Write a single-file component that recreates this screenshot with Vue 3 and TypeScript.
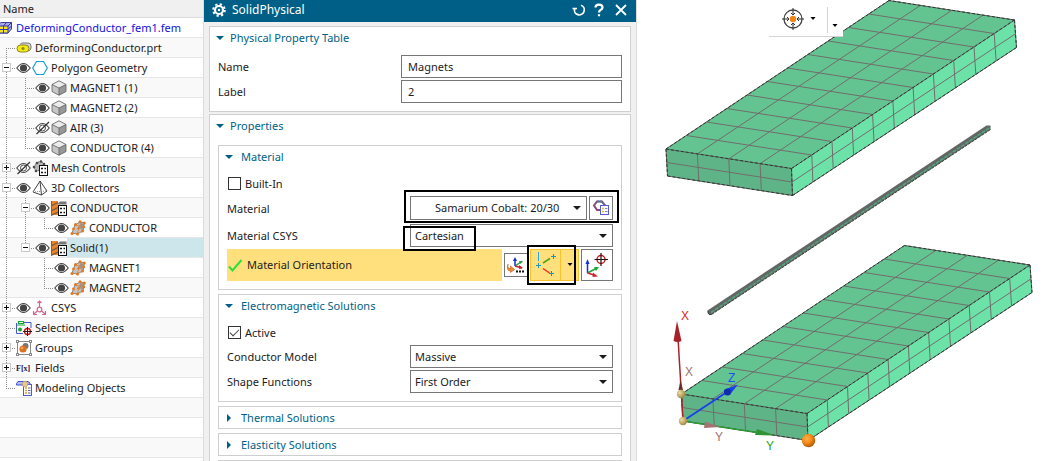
<script setup lang="ts">
import { ref } from 'vue'

type Point = [number, number]
type Icon =
  | 'fem' | 'part' | 'polygon' | 'body' | 'mesh' | 'pyramid' | 'collector'
  | 'elements' | 'csys' | 'recipe' | 'groups' | 'fields' | 'objects' | 'none'

interface TreeRow {
  label: string
  icon: Icon
  /* one entry per ancestor level, true where its trunk line runs on */
  through: boolean[]
  trunk: 'start' | 'full' | 'end' | 'none'
  toggle?: 'plus' | 'minus'
  eye?: 'on' | 'off'
  root?: boolean
  selected?: boolean
}

const rows: TreeRow[] = [
  { label: 'DeformingConductor_fem1.fem', icon: 'fem', through: [], trunk: 'none', root: true },
  { label: 'DeformingConductor.prt', icon: 'part', through: [], trunk: 'start' },
  { label: 'Polygon Geometry', icon: 'polygon', through: [], trunk: 'full', toggle: 'minus', eye: 'on' },
  { label: 'MAGNET1 (1)', icon: 'body', through: [true], trunk: 'full', eye: 'on' },
  { label: 'MAGNET2 (2)', icon: 'body', through: [true], trunk: 'full', eye: 'on' },
  { label: 'AIR (3)', icon: 'body', through: [true], trunk: 'full', eye: 'off' },
  { label: 'CONDUCTOR (4)', icon: 'body', through: [true], trunk: 'end', eye: 'on' },
  { label: 'Mesh Controls', icon: 'mesh', through: [], trunk: 'full', toggle: 'plus', eye: 'off' },
  { label: '3D Collectors', icon: 'pyramid', through: [], trunk: 'full', toggle: 'minus', eye: 'on' },
  { label: 'CONDUCTOR', icon: 'collector', through: [true], trunk: 'full', toggle: 'minus', eye: 'on' },
  { label: 'CONDUCTOR', icon: 'elements', through: [true, true], trunk: 'end', eye: 'on' },
  { label: 'Solid(1)', icon: 'collector', through: [true], trunk: 'end', toggle: 'minus', eye: 'on', selected: true },
  { label: 'MAGNET1', icon: 'elements', through: [true, false], trunk: 'full', eye: 'on' },
  { label: 'MAGNET2', icon: 'elements', through: [true, false], trunk: 'end', eye: 'on' },
  { label: 'CSYS', icon: 'csys', through: [], trunk: 'full', toggle: 'plus', eye: 'on' },
  { label: 'Selection Recipes', icon: 'recipe', through: [], trunk: 'full' },
  { label: 'Groups', icon: 'groups', through: [], trunk: 'full', toggle: 'plus' },
  { label: 'Fields', icon: 'fields', through: [], trunk: 'full', toggle: 'plus' },
  { label: 'Modeling Objects', icon: 'objects', through: [], trunk: 'end' },
  { label: '', icon: 'none', through: [], trunk: 'none' },
  { label: '', icon: 'none', through: [], trunk: 'none' },
  { label: '', icon: 'none', through: [], trunk: 'none' },
  { label: '', icon: 'none', through: [], trunk: 'none' },
]

const name = ref('Magnets')
const label = ref('2')
const builtIn = ref(false)
const active = ref(true)
const collapsed = ['Thermal Solutions', 'Elasticity Solutions']

const mix = (a: Point, b: Point, t: number): Point => [a[0] + (b[0] - a[0]) * t, a[1] + (b[1] - a[1]) * t]
const seg = (a: Point, b: Point) => `M${a[0].toFixed(1)} ${a[1].toFixed(1)}L${b[0].toFixed(1)} ${b[1].toFixed(1)}`
const face = (...p: Point[]) => p.map((q) => q.join(',')).join(' ')

function grid(a: Point, b: Point, c: Point, d: Point, alongAB: number, alongBC: number) {
  let path = ''
  for (let i = 1; i < alongAB; i++) path += seg(mix(a, b, i / alongAB), mix(d, c, i / alongAB))
  for (let i = 1; i < alongBC; i++) path += seg(mix(b, c, i / alongBC), mix(a, d, i / alongBC))
  return path
}

function block(dx: number, dy: number) {
  const p = (x: number, y: number): Point => [x + dx, y + dy]
  const a = p(666, 149)
  const b = p(791.5, 168.5)
  const c = p(1014.5, 20)
  const d = p(889, 0.5)
  const a2 = p(667.5, 176)
  const b2 = p(792.5, 195.5)
  const c2 = p(1016.5, 47.5)
  return {
    top: face(a, b, c, d),
    front: face(a, b, b2, a2),
    side: face(b, c, c2, b2),
    lines: grid(a, b, c, d, 4, 11) + grid(a, b, b2, a2, 4, 2) + grid(b, c, c2, b2, 11, 2),
    hard: seg(a, b) + seg(b, c) + seg(c, d) + seg(d, a) + seg(b, b2) + seg(a, a2) + seg(a2, b2) + seg(b2, c2) + seg(c, c2),
  }
}

const blocks = [block(0, 0), block(15.5, 245)]
</script>

<template>
  <main class="app">
    <aside class="tree">
      <header class="tree-head">Name</header>
      <ul>
        <li v-for="(row, i) in rows" :key="i" :class="{ root: row.root }">
          <svg v-for="(on, g) in row.through" :key="g" class="guide" viewBox="0 0 19 20">
            <path v-if="on" class="dots" d="M6.5 0V20" />
          </svg>
          <span v-if="!row.root && row.icon !== 'none'" class="branch">
            <svg viewBox="0 0 16 20">
              <path v-if="row.trunk === 'start'" class="dots" d="M6.5 10V20" />
              <path v-if="row.trunk === 'full'" class="dots" d="M6.5 0V20" />
              <path v-if="row.trunk === 'end'" class="dots" d="M6.5 0V10" />
              <path class="dots" d="M6 10.5H15" />
            </svg>
            <button v-if="row.toggle" class="toggle" type="button" :aria-label="'Toggle ' + row.label">
              <svg viewBox="0 0 9 9">
                <rect x=".5" y=".5" width="8" height="8" fill="#fff" stroke="#c9c9c9" />
                <path :d="row.toggle === 'plus' ? 'M2 4.5H7M4.5 2V7' : 'M2 4.5H7'" stroke="#111" />
              </svg>
            </button>
          </span>
          <button v-if="row.eye" class="eye" type="button" :aria-label="'Visibility of ' + row.label">
            <svg viewBox="0 0 16 16">
              <path d="M.8 8Q7.500 -1 14.200 8Q7.500 17 .8 8Z" fill="#fff" stroke="#4a4a4a" stroke-width="1.200" />
              <circle v-if="row.eye === 'on'" cx="7.500" cy="8" r="3.600" fill="#444" />
              <template v-else>
                <circle cx="7.500" cy="8" r="3" fill="none" stroke="#4a4a4a" />
                <path d="M1.500 14L14 2" stroke="#333" stroke-width="1.200" />
              </template>
            </svg>
          </button>

          <svg v-if="row.icon === 'fem'" class="icon fem" viewBox="0 0 13 16">
            <path d="M-3 6L1 2.500H11.500V9L8 13H-3Z" fill="#a9a9e4" stroke="#3c3c9c" />
            <path d="M-1 6H8V13H-1Z" fill="#f4e52a" stroke="#3434a8" />
            <path d="M3.500 6V13M-1 9.500H8M8 6L11.500 2.500M3.500 6L6.500 2.500M8 9.500L11.500 6" stroke="#3434a8" fill="none" />
          </svg>
          <svg v-else-if="row.icon === 'part'" class="icon" viewBox="0 0 16 16">
            <path d="M4 4.500Q5 3 7 3H12Q15 3 15 6V8Q15 10 12.500 11" fill="#d6d6d6" stroke="#777" />
            <rect x="1" y="5" width="12" height="7" rx="3.500" fill="#f4ea10" stroke="#8b8527" />
            <circle cx="7" cy="8.500" r="1.600" fill="#8c8a30" />
          </svg>
          <svg v-else-if="row.icon === 'polygon'" class="icon" viewBox="0 0 16 16">
            <path d="M4.500 1.500H11.500L15.300 8L11.500 14.500H4.500L.7 8Z" fill="#fff" stroke="#1ba3c6" stroke-width="1.200" />
          </svg>
          <svg v-else-if="row.icon === 'body'" class="icon" viewBox="0 0 16 16">
            <path d="M8 .8L15 4.500V11.500L8 15.300L1 11.500V4.500Z" fill="#c6c6c6" />
            <path d="M8 .8L15 4.500L8 8L1 4.500Z" fill="#ececec" />
            <path d="M8 8L15 4.500V11.500L8 15.300Z" fill="#989898" />
            <path d="M8 .8L15 4.500V11.500L8 15.300L1 11.500V4.500ZM1 4.500L8 8L15 4.500M8 8V15" fill="none" stroke="#5d5d5d" stroke-width=".8" />
          </svg>
          <svg v-else-if="row.icon === 'mesh'" class="icon" viewBox="0 0 16 16">
            <path d="M2 8L4 3L9 1L12 4L11 10L4 11Z" fill="#b8b8b8" stroke="#666" stroke-dasharray="1.500 1" />
            <g fill="#4a4a4a"><circle cx="2" cy="7" r="1.300" /><circle cx="5" cy="3" r="1.300" /><circle cx="9" cy="1.500" r="1.300" /><circle cx="4" cy="11" r="1.300" /><circle cx="12" cy="4" r="1.300" /></g>
            <rect x="7.500" y="5.500" width="8" height="10" fill="#fff" stroke="#111" />
            <path d="M9 8.500H11M12.500 8.500H14M9 12.500H11M12.500 12.500H14" stroke="#111" stroke-width="1.600" />
          </svg>
          <svg v-else-if="row.icon === 'pyramid'" class="icon" viewBox="0 0 16 16">
            <path d="M8 1L1 12L9.500 15L15 11Z" fill="#fff" stroke="#444" stroke-linejoin="round" />
            <path d="M8 1L9.500 15" stroke="#444" />
            <path d="M1 12L15 11" stroke="#888" stroke-dasharray="1 1" />
          </svg>
          <svg v-else-if="row.icon === 'collector'" class="icon" viewBox="0 0 16 16">
            <rect x="0" y="1" width="7" height="14" fill="#e8842a" />
            <path d="M0 6L7 2.500M0 11L7 7.500M0 15.500L7 12" stroke="#7a5a36" stroke-width="1.200" />
            <path d="M.5 1V15" stroke="#a75a1a" />
            <path d="M7 3.500L9 1.500H15.500V4.500H7Z" fill="#777" />
            <rect x="7.500" y="5.500" width="8" height="10" fill="#fff" stroke="#111" />
            <path d="M9 8.500H11M12.500 8.500H14M9 12.500H11M12.500 12.500H14" stroke="#111" stroke-width="1.600" />
          </svg>
          <svg v-else-if="row.icon === 'elements'" class="icon" viewBox="0 0 16 16">
            <path d="M2 13L5 5L10 2L14.500 3L13 11L7 14Z" fill="#c4c4c4" stroke="#8a8a8a" />
            <path d="M10 3L14 4L12.500 10L9 8Z" fill="#999" />
            <path d="M5 5L9 6L7.500 14M9 6L14 3" stroke="#e07b22" stroke-width=".7" fill="none" />
            <g fill="#e8761a"><circle cx="2" cy="13.500" r="1.500" /><circle cx="3.500" cy="9" r="1.400" /><circle cx="5.500" cy="4.500" r="1.500" /><circle cx="10" cy="1.700" r="1.500" /><circle cx="14.300" cy="3" r="1.500" /><circle cx="13.700" cy="7" r="1.400" /><circle cx="12.500" cy="11" r="1.500" /><circle cx="7.500" cy="14" r="1.500" /><circle cx="8.500" cy="8.500" r="1.200" /></g>
          </svg>
          <svg v-else-if="row.icon === 'csys'" class="icon" viewBox="0 0 16 16">
            <g fill="none" stroke="#d2668c" stroke-width="1.200">
              <path d="M7.500 1V9M7.500 9L2 14M7.500 9L13 14M5.500 3L7.500 1L9.500 3M1.500 11V14.500H5M10 14.500H13.500V11" />
              <circle cx="7.500" cy="9.500" r="2.300" fill="#fff" />
            </g>
          </svg>
          <svg v-else-if="row.icon === 'recipe'" class="icon" viewBox="0 0 16 16">
            <path d="M.5 3V13.500H7M15 8V2.500H8" fill="none" stroke="#4a58c8" />
            <path d="M2.500 1.500H7.500V3.500H2.500ZM1 5H9" fill="none" stroke="#12a82c" stroke-width="1.200" />
            <circle cx="4" cy="9.500" r="2" fill="#12a82c" />
            <circle cx="11.500" cy="11.500" r="3" fill="#fff" stroke="#c01818" stroke-width="1.300" />
            <path d="M11.500 7V16M7 11.500H16" stroke="#401010" />
          </svg>
          <svg v-else-if="row.icon === 'groups'" class="icon" viewBox="0 0 16 16">
            <rect x="1.500" y="1.500" width="13" height="13" fill="#fff" stroke="#8a8a8a" />
            <circle cx="9.500" cy="6" r="3" fill="#777" />
            <circle cx="7" cy="9" r="3.600" fill="#e06f1c" />
            <circle cx="6" cy="8" r="1.300" fill="#f5a55e" />
            <g fill="#fff" stroke="#888"><rect x=".5" y=".5" width="2" height="2" /><rect x="13.500" y=".5" width="2" height="2" /><rect x=".5" y="13.500" width="2" height="2" /><rect x="13.500" y="13.500" width="2" height="2" /></g>
          </svg>
          <svg v-else-if="row.icon === 'fields'" class="icon" viewBox="0 0 16 16">
            <text x="0" y="11" class="fx">F[x]</text>
          </svg>
          <svg v-else-if="row.icon === 'objects'" class="icon" viewBox="0 0 16 16">
            <path d="M.5 3.500L2 1.500H12L14 3V5H.5Z" fill="#aebcf2" stroke="#3b4fd0" />
            <rect x="7.500" y="4.500" width="8" height="11" fill="#fff" stroke="#4a5fc8" />
            <path d="M9 8H11M9 10.500H11M9 13H11" stroke="#e0a818" stroke-width="1.500" />
            <path d="M12 8H14.500M12 10.500H14.500M12 13H14.500" stroke="#5060b0" />
            <circle cx="9" cy="4" r="2.800" fill="#e9c78f" stroke="#b9966a" stroke-width=".7" />
          </svg>
          <span v-if="row.label" class="label" :class="{ selected: row.selected }">{{ row.label }}</span>
        </li>
      </ul>
    </aside>

    <section class="dialog" aria-label="SolidPhysical">
      <header class="title">
        <svg class="gear" viewBox="0 0 14 14">
          <circle cx="7" cy="7" r="5.800" fill="none" stroke="#fff" stroke-width="2" stroke-dasharray="2.300 2.255" />
          <circle cx="7" cy="7" r="4" fill="none" stroke="#fff" stroke-width="2.200" />
          <circle cx="7" cy="7" r="1.200" fill="#fff" />
        </svg>
        <h1>SolidPhysical</h1>
        <button type="button" aria-label="Reset">
          <svg viewBox="0 0 14 14"><path d="M9 2.200A5 5 0 1 1 2.500 5.500M.5 5.500H5M2.500 5.500V8" fill="none" stroke="#fff" stroke-width="1.700" /></svg>
        </button>
        <button type="button" aria-label="Help">
          <svg viewBox="0 0 14 14"><path d="M3.500 4.500Q3.500 1.600 7 1.600T10.500 4.500Q10.500 6 8.500 7Q7 7.800 7 9.500M7 11.200V13.200" fill="none" stroke="#fff" stroke-width="2.200" /></svg>
        </button>
        <button type="button" aria-label="Close" class="close">
          <svg viewBox="0 0 14 14"><path d="M2 2L12 12M12 2L2 12" stroke="#fff" stroke-width="1.800" /></svg>
        </button>
      </header>

      <div class="panels">
        <section class="panel">
          <h2><svg viewBox="0 0 8 8"><path d="M0 2H8L4 6Z" /></svg>Physical Property Table</h2>
          <div class="body">
            <div class="row">
              <label for="f-name">Name</label>
              <input id="f-name" v-model="name" class="field" type="text" />
            </div>
            <div class="row">
              <label for="f-label">Label</label>
              <input id="f-label" v-model="label" class="field" type="text" />
            </div>
          </div>
        </section>

        <section class="panel grow">
          <h2><svg viewBox="0 0 8 8"><path d="M0 2H8L4 6Z" /></svg>Properties</h2>
          <div class="groups">
            <section class="group">
              <h3><svg viewBox="0 0 8 8"><path d="M0 2H8L4 6Z" /></svg>Material</h3>
              <div class="body">
                <label class="check"><input v-model="builtIn" type="checkbox" />Built-In</label>
                <div class="row tall">
                  <label for="f-mat">Material</label>
                  <div class="pair marked">
                    <div class="combo indent">
                      <select id="f-mat"><option>Samarium Cobalt: 20/30</option></select>
                      <svg viewBox="0 0 8 8"><path d="M0 2H8L4 6Z" /></svg>
                    </div>
                    <button type="button" class="tool small" aria-label="Choose material">
                      <svg viewBox="0 0 18 18">
                        <path d="M5 2.500H10L13 6.500L10 11H5L2 6.500Z" fill="none" stroke="#8a4a78" stroke-width="2" />
                        <path d="M5 2.500H10L13 6.500" fill="none" stroke="#4a7f9c" stroke-width="2" stroke-dasharray="2 1" />
                        <rect x="8.500" y="6.500" width="8" height="9" fill="#fdfdff" stroke="#5a5ad8" />
                        <path d="M10 9.500H12M10 12.500H12" stroke="#d8c41c" stroke-width="1.500" />
                        <path d="M13 9.500H15.500M13 12.500H15.500" stroke="#8484b8" />
                      </svg>
                    </button>
                  </div>
                </div>
                <div class="row">
                  <label for="f-csys">Material CSYS</label>
                  <div class="combo value-marked">
                    <select id="f-csys"><option>Cartesian</option></select>
                    <svg viewBox="0 0 8 8"><path d="M0 2H8L4 6Z" /></svg>
                  </div>
                </div>
                <div class="orient">
                  <div class="orient-label">
                    <svg viewBox="0 0 16 16"><path d="M2 9.500L5.500 13.500L14.500 3" fill="none" stroke="#2be03a" stroke-width="2" /></svg>
                    Material Orientation
                  </div>
                  <button type="button" class="tool small" aria-label="CSYS dialog">
                    <svg viewBox="0 0 18 18">
                      <path d="M8 10V3" stroke="#1a2ad0" stroke-width="1.500" /><path d="M6 5L8 1L10 5Z" fill="#1a2ad0" />
                      <path d="M8 10L14 6" stroke="#1f9a3a" stroke-width="1.500" /><path d="M12 5L16 5L13.500 8Z" fill="#1f9a3a" />
                      <path d="M8 10L15 12" stroke="#c81e28" stroke-width="1.500" /><path d="M12 9L16 12L12 13Z" fill="#c81e28" />
                      <path d="M1 8Q0 12.500 3.500 12.500V10L7.500 13.500L3.500 16.500V15Q-1 15 1 8Z" fill="#f08a2a" stroke="#c05a20" stroke-width=".6" />
                      <path d="M9 15.500H11M12 15.500H14M15 15.500H17" stroke="#111" stroke-width="2" />
                    </svg>
                  </button>
                  <div class="split">
                    <button type="button" class="split-main" aria-label="Orient by points">
                      <svg viewBox="0 0 26 30">
                        <path d="M5.500 2V11" stroke="#28a8dc" />
                        <path d="M10 13L17 8.500" stroke="#4aa810" stroke-width="1.500" />
                        <path d="M10 18.500L16.500 23" stroke="#ee2b24" stroke-width="1.500" />
                        <path d="M3 15.500H8M5.500 13V18M18 6.500H23M20.500 4V9M16 23.500H21M18.500 21V26" stroke="#1698b4" />
                      </svg>
                    </button>
                    <button type="button" class="split-more" aria-label="More orientation methods">
                      <svg viewBox="0 0 6 4"><path d="M.5 0H5.500L3 3Z" /></svg>
                    </button>
                  </div>
                  <button type="button" class="tool" aria-label="Manipulate CSYS">
                    <svg viewBox="0 0 26 26">
                      <path d="M3.500 21V11" stroke="#1a2ae0" stroke-width="1.500" /><path d="M1.500 12L3.500 7L5.500 12Z" fill="#1a2ae0" />
                      <path d="M3.500 21L12 16.500" stroke="#19a83a" stroke-width="1.500" /><path d="M10 15L15 15L12 19Z" fill="#19a83a" />
                      <path d="M3.500 21L10 23" stroke="#c82832" stroke-width="1.500" /><path d="M9 20.500L14 24.500L8.500 25Z" fill="#c82832" />
                      <circle cx="17" cy="7.500" r="4" fill="none" stroke="#c02020" stroke-width="1.500" />
                      <path d="M17 1V14M10.500 7.500H24" stroke="#201010" stroke-width="1.200" />
                    </svg>
                  </button>
                </div>
              </div>
            </section>

            <section class="group">
              <h3><svg viewBox="0 0 8 8"><path d="M0 2H8L4 6Z" /></svg>Electromagnetic Solutions</h3>
              <div class="body">
                <label class="check"><input v-model="active" type="checkbox" />Active</label>
                <div class="row">
                  <label for="f-model">Conductor Model</label>
                  <div class="combo">
                    <select id="f-model"><option>Massive</option></select>
                    <svg viewBox="0 0 8 8"><path d="M0 2H8L4 6Z" /></svg>
                  </div>
                </div>
                <div class="row">
                  <label for="f-shape">Shape Functions</label>
                  <div class="combo">
                    <select id="f-shape"><option>First Order</option></select>
                    <svg viewBox="0 0 8 8"><path d="M0 2H8L4 6Z" /></svg>
                  </div>
                </div>
              </div>
            </section>

            <section v-for="t in collapsed" :key="t" class="group">
              <h3><svg viewBox="0 0 8 8"><path d="M2 0L6 4L2 8Z" /></svg>{{ t }}</h3>
            </section>
            <section class="group stub"></section>
          </div>
        </section>
      </div>
    </section>

    <section class="viewport" aria-label="Graphics window">
      <svg class="scene" viewBox="637 0 407 461" preserveAspectRatio="xMinYMin meet">
        <defs>
          <radialGradient id="gold" cx=".35" cy=".35" r=".7"><stop offset="0" stop-color="#efdda0" /><stop offset="1" stop-color="#9c8444" /></radialGradient>
          <radialGradient id="amber" cx=".38" cy=".35" r=".7"><stop offset="0" stop-color="#ffb04a" /><stop offset=".5" stop-color="#f58a16" /><stop offset="1" stop-color="#a85406" /></radialGradient>
        </defs>
        <g v-for="(b, i) in blocks" :key="i">
          <polygon :points="b.top" fill="#63c491" />
          <polygon :points="b.front" fill="#5fb487" />
          <polygon :points="b.side" fill="#6de2a8" />
          <path :d="b.lines" fill="none" stroke="#716d6c" />
          <path :d="b.hard" fill="none" stroke="#5a625d" />
          <path :d="b.hard" fill="none" stroke="#2e3832" stroke-dasharray="3 2" />
        </g>

        <path d="M707.500 310.500L986.500 125.500H990.500V129.500L711.500 314.500L708 314Z" fill="#626664" />
        <path d="M711 312.500L990 127.500" stroke="#56a47e" stroke-width="1.500" stroke-dasharray="4 1" />
        <path d="M711.500 314.500L990.500 129.500M708 311L708.500 314.500L711.500 314.500" fill="none" stroke="#3a423e" stroke-dasharray="3 1" />

        <path d="M683 421L678 338" stroke="#a8242c" stroke-width="1.500" />
        <path d="M677 321L673.500 341Q677.500 343 681.500 341Z" fill="#a82028" />
        <path d="M680.500 380L678.500 390H683Z" fill="#6b2c28" />
        <path d="M683 421L760 433" stroke="#2d9a35" stroke-width="1.500" />
        <path d="M705 421.500L720 427L704 428Z" fill="#a27370" />
        <path d="M757 429L775 435.500L755 435Z" fill="#2f9233" />
        <path d="M683 421L730 390" stroke="#1740ee" stroke-width="1.800" />
        <path d="M738 384.500L724 390Q724 395 730 394.500Z" fill="#1740ee" />
        <circle cx="727.500" cy="392" r="3.500" fill="#0f2cae" />
        <circle cx="681" cy="394" r="4.200" fill="url(#gold)" />
        <circle cx="683" cy="421" r="4.200" fill="url(#gold)" />
        <circle cx="808.500" cy="440.500" r="6.700" fill="url(#amber)" />
        <g class="axis">
          <text x="681" y="320" fill="#d82a2a">X</text>
          <text x="685" y="376" fill="#a27270">X</text>
          <text x="728" y="382" fill="#1a50f0">Z</text>
          <text x="715" y="441" fill="#a27270">Y</text>
          <text x="766" y="450" fill="#2ca02c">Y</text>
        </g>
      </svg>
      <div class="float">
        <button type="button" aria-label="Snap point">
          <svg viewBox="0 0 24 24" class="snap">
            <circle cx="12" cy="12" r="9" fill="none" stroke="#444" stroke-width="1.300" />
            <path d="M12 1V8M12 16V23M1 12H8M16 12H23M10 6L12 8L14 6M10 18L12 16L14 18M6 10L8 12L6 14M18 10L16 12L18 14" fill="none" stroke="#333" />
            <circle cx="12" cy="12" r="3.200" fill="#f48414" />
          </svg>
        </button>
        <button type="button" aria-label="Snap options" class="drop"><svg viewBox="0 0 6 4"><path d="M.5 0H5.500L3 3Z" /></svg></button>
        <button type="button" aria-label="Toolbar options" class="drop more"><svg viewBox="0 0 6 4"><path d="M.5 0H5.500L3 3Z" /></svg></button>
      </div>
    </section>
  </main>
</template>

<style>
html,
body {
  margin: 0;
  background: #fff;
}
</style>

<style scoped>
*,
*::after {
  box-sizing: border-box;
}

.app {
  display: grid;
  grid-template-columns: 204fr 433fr 407fr;
  height: 100vh;
  overflow: hidden;
  font: 11px/16px "Noto Sans", "Open Sans", sans-serif;
  color: #1c1c1c;
}

button {
  display: flex;
  align-items: center;
  justify-content: center;
  margin: 0;
  padding: 0;
  border: 0;
  background: none;
}

svg {
  display: block;
  flex: none;
}

h1,
h2,
h3,
ul {
  margin: 0;
  padding: 0;
  font-size: 11px;
  font-weight: 400;
}

/* navigator tree */
.tree {
  min-width: 0;
  overflow: hidden;
  border-right: 1px solid #dcdcdc;
}

.tree-head {
  height: 18px;
  padding-left: 3px;
  border-bottom: 1px solid #dcdcdc;
  background: #f0f0f0;
  line-height: 18px;
}

.tree li {
  display: flex;
  align-items: center;
  height: 20px;
  border-bottom: 1px solid #e6e6e6;
  white-space: nowrap;
}

.tree li:nth-child(even) {
  background: #f9f9f9;
}

.guide {
  width: 19px;
  height: 20px;
}

.branch {
  display: grid;
  width: 16px;
  height: 20px;
}

.branch > * {
  grid-area: 1 / 1;
}

.branch > svg {
  width: 16px;
  height: 20px;
}

.dots {
  fill: none;
  stroke: #8c8c8c;
  stroke-dasharray: 1 1;
}

.toggle {
  align-self: center;
  justify-self: start;
  margin-left: 2px;
}

.toggle svg {
  width: 9px;
  height: 9px;
}

.eye svg,
.icon {
  width: 16px;
  height: 16px;
}

.icon.fem {
  width: 13px;
}

.label {
  flex: 1;
  padding-left: 3px;
  line-height: 19px;
}

.root .label {
  color: #1212e0;
}

.selected {
  background: #cde6eb;
}

.fx {
  font: bold 8px "Liberation Serif", serif;
  fill: #1c1450;
}

/* dialog */
.dialog {
  display: flex;
  flex-direction: column;
  min-width: 0;
  overflow: hidden;
  border-right: 1px solid #dcdcdc;
  background: #f0f0f0;
}

.title {
  display: flex;
  flex: none;
  align-items: center;
  gap: 6px;
  height: 22px;
  margin-right: -1px;
  padding: 0 9px 2px 8px;
  background: #005f87;
  color: #fff;
}

.title h1 {
  flex: 1;
  font-size: 12px;
}

.title svg {
  width: 14px;
  height: 14px;
}

.title .close {
  margin-left: 2px;
}

.panels {
  display: flex;
  flex: 1;
  flex-direction: column;
  gap: 2px;
  padding: 4px 5px 0;
}

.panel,
.group {
  border: 1px solid #cfcfcf;
  background: #fff;
}

.panel.grow {
  flex: 1;
  border-bottom: 0;
}

h2,
h3 {
  display: flex;
  align-items: center;
  gap: 6px;
  height: 22px;
  padding-left: 6px;
  color: #005f87;
}

h3 {
  gap: 8px;
  height: 21px;
}

h2 svg,
h3 svg,
.combo svg {
  width: 8px;
  height: 8px;
  fill: currentColor;
}

.body {
  display: flex;
  flex-direction: column;
  gap: 2px;
  padding: 6px 8px 8px;
}

.groups {
  display: flex;
  flex-direction: column;
  gap: 4px;
  padding: 8px 8px 0;
}

.stub {
  height: 23px;
}

.row {
  display: flex;
  height: 23px;
}

.row.tall {
  height: 26px;
}

.row > label {
  flex: none;
  align-self: center;
  width: 183px;
}

.field,
.combo {
  flex: 1;
  min-width: 0;
  border: 1px solid #767676;
  background: #fff;
}

.field {
  padding: 0 6px;
  border-radius: 0;
  color: inherit;
  font: inherit;
}

.combo {
  position: relative;
  display: flex;
  align-items: center;
}

.combo select {
  flex: 1;
  width: 100%;
  height: 100%;
  padding: 0 20px 0 4px;
  border: 0;
  background: none;
  color: inherit;
  font: inherit;
  appearance: none;
}

.combo svg {
  position: absolute;
  right: 5px;
}

.combo.indent select {
  padding-left: 24px;
}

.pair {
  position: relative;
  display: flex;
  flex: 1;
  gap: 2px;
  height: 24px;
}

.marked::after,
.value-marked::after,
.split::after {
  position: absolute;
  border: 2px solid #000;
  content: "";
  pointer-events: none;
}

.marked::after {
  inset: -6px -6px -3px;
}

.value-marked::after {
  top: 1px;
  left: -8px;
  width: 73px;
  height: 25px;
}

.split::after {
  top: -5px;
  left: -4px;
  width: 49px;
  height: 40px;
}

.check {
  display: flex;
  align-items: center;
  align-self: flex-start;
  gap: 4px;
  height: 21px;
  padding-left: 1px;
}

.check input {
  display: grid;
  width: 13px;
  height: 13px;
  margin: 0;
  border: 1px solid #333;
  background: #fff;
  appearance: none;
}

.check input:checked::after {
  width: 9px;
  height: 5px;
  margin: 2px 1px;
  border: solid #444;
  border-width: 0 0 1px 1px;
  content: "";
  transform: rotate(-45deg);
}

.orient {
  display: flex;
  align-items: center;
  gap: 2px;
  height: 32px;
}

.orient-label {
  display: flex;
  flex: 1;
  align-items: center;
  gap: 4px;
  height: 100%;
  background: #ffe07c;
}

.orient-label svg {
  width: 16px;
  height: 16px;
}

.tool {
  flex: none;
  width: 32px;
  height: 32px;
  border: 1px solid #767676;
  background: #fff;
}

.tool svg {
  width: 26px;
  height: 26px;
}

.tool.small {
  width: 24px;
  height: 24px;
}

.tool.small svg {
  width: 18px;
  height: 18px;
}

.split {
  position: relative;
  display: flex;
  width: 49px;
  height: 32px;
  border: 1px solid #f8c32c;
  background: #ffe07c;
}

.split-main {
  flex: 1;
  border-right: 1px solid #f8c32c;
}

.split-main svg {
  width: 26px;
  height: 30px;
}

.split-more {
  width: 17px;
}

.split-more svg,
.drop svg {
  width: 6px;
  height: 4px;
}

/* graphics window */
.viewport {
  position: relative;
  min-width: 0;
  overflow: hidden;
  background: #fff;
}

.scene {
  width: 100%;
}

.axis {
  font: 12px "Liberation Sans", sans-serif;
}

.float {
  position: absolute;
  top: 0;
  left: 132px;
  display: flex;
  height: 37px;
  padding: 2px 1px 0 12px;
  border-bottom: 1px solid #d4d4d4;
  background: #fff;
}

.snap {
  width: 24px;
  height: 24px;
}

.drop {
  width: 16px;
}

.drop.more {
  width: 15px;
  height: 26px;
  margin: 5px 0 0 6px;
  padding-top: 12px;
  border-left: 1px solid #d4d4d4;
}
</style>
